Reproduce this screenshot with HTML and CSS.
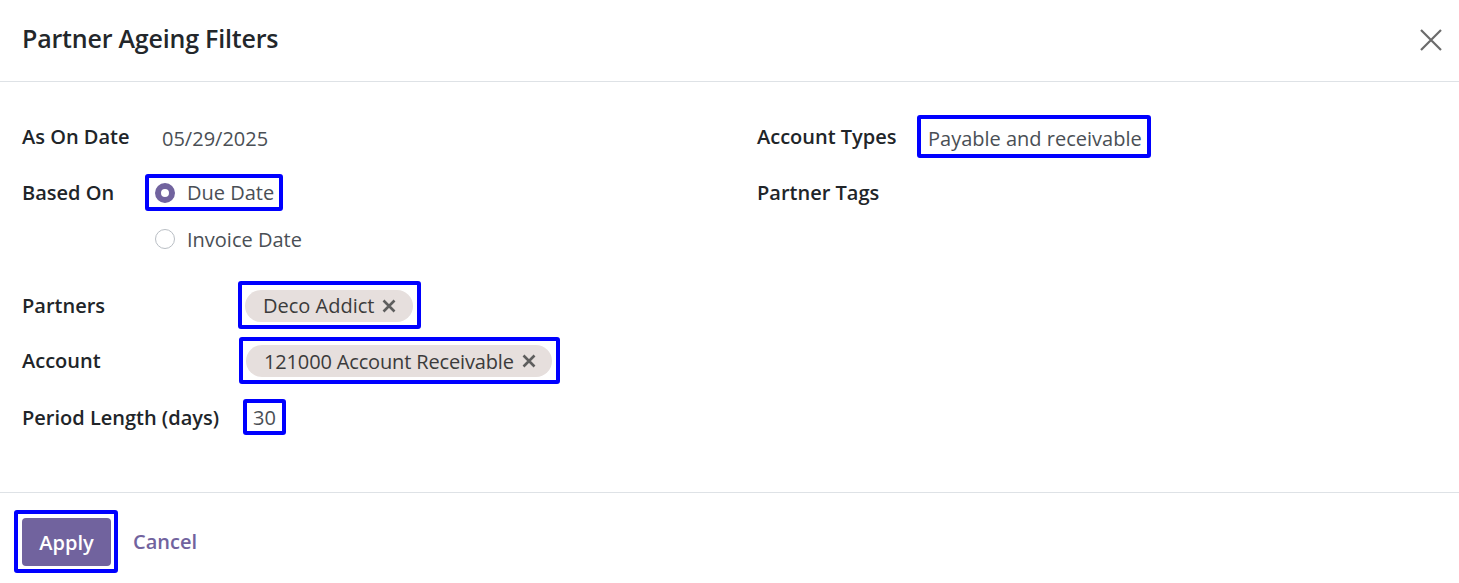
FILE: index.html
```html
<!DOCTYPE html>
<html>
<head>
<meta charset="utf-8">
<link rel="stylesheet" href="styles.css">
</head>
<body>
<div class="modal">
  <header class="modal-header">
    <h4 class="title">Partner Ageing Filters</h4>
    <button class="close" aria-label="Close">
      <svg width="24" height="24" viewBox="0 0 24 24"><path d="M2 2 L22 22 M22 2 L2 22" stroke="#6b6b6b" stroke-width="2.2" fill="none"/></svg>
    </button>
  </header>
  <main class="modal-body">
    <section class="col col-left">
      <div class="row r-date">
        <span class="label lw-date">As On Date</span>
        <span class="value low">05/29/2025</span>
      </div>
      <div class="row r-based">
        <span class="label lw-based">Based On</span>
        <div class="hl radio-box">
          <span class="radio checked"></span>
          <span class="value">Due Date</span>
        </div>
      </div>
      <div class="row r-invoice">
        <span class="radio"></span>
        <span class="value">Invoice Date</span>
      </div>
      <div class="row r-partners">
        <span class="label lw-partners">Partners</span>
        <div class="hl tag-box tb-partner">
          <span class="tag">Deco Addict
            <svg class="x" width="14" height="14" viewBox="0 0 14 14"><path d="M1.5 1.5 L12.5 12.5 M12.5 1.5 L1.5 12.5" stroke="#5e5e5e" stroke-width="2.6" fill="none"/></svg>
          </span>
        </div>
      </div>
      <div class="row r-account">
        <span class="label lw-account">Account</span>
        <div class="hl tag-box tb-account">
          <span class="tag">121000 Account Receivable
            <svg class="x" width="14" height="14" viewBox="0 0 14 14"><path d="M1.5 1.5 L12.5 12.5 M12.5 1.5 L1.5 12.5" stroke="#5e5e5e" stroke-width="2.6" fill="none"/></svg>
          </span>
        </div>
      </div>
      <div class="row r-period">
        <span class="label lw-period">Period Length (days)</span>
        <div class="hl num-box"><span class="value">30</span></div>
      </div>
    </section>
    <section class="col col-right">
      <div class="row r-types">
        <span class="label lw-types">Account Types</span>
        <div class="hl types-box"><span class="value low">Payable and receivable</span></div>
      </div>
      <div class="row r-tags">
        <span class="label">Partner Tags</span>
      </div>
    </section>
  </main>
  <footer class="modal-footer">
    <div class="hl apply-box"><button class="btn-apply">Apply</button></div>
    <button class="btn-cancel">Cancel</button>
  </footer>
</div>
</body>
</html>
```

FILE: styles.css
```css
* { box-sizing: border-box; }
html, body { margin: 0; padding: 0; background: #fff; }
body {
  font-family: "Open Sans", "Noto Sans", "DejaVu Sans", sans-serif;
  font-size: 20px;
  color: #212529;
}
.modal { width: 1459px; height: 583px; display: flex; flex-direction: column; }

.modal-header {
  height: 82px;
  border-bottom: 1px solid #dee2e6;
  display: flex;
  align-items: center;
  justify-content: space-between;
  padding: 0 16px 6px 22px;
}
.title { margin: 0; font-size: 25px; font-weight: 600; color: #23272b; letter-spacing: -0.2px; }
.close { background: none; border: 0; padding: 0; width: 24px; height: 24px; display: flex; margin-top: 4px; }

.modal-body {
  height: 411px;
  display: flex;
  padding: 32px 0 0 22px;
  border-bottom: 1px solid #dee2e6;
}
.col { display: flex; flex-direction: column; }
.col-left { width: 735px; }
.col-right { flex: 1; }

.row { display: flex; align-items: center; }
.label { font-weight: 600; color: #212529; flex: none; }
.value { color: #4a4f55; }
.low { padding-top: 4px; }

.lw-date { width: 140px; }
.lw-based { width: 123px; }
.lw-partners { width: 216px; }
.lw-account { width: 217px; }
.lw-period { width: 221px; }
.lw-types { width: 160px; }

.r-date { height: 44px; }
.r-based { height: 37px; margin-top: 16px; }
.r-invoice { height: 36px; margin-top: 10px; padding-left: 133px; gap: 12px; }
.r-partners { height: 48px; margin-top: 24px; }
.r-account { height: 47px; margin-top: 8px; }
.r-period { height: 36px; margin-top: 15px; }
.r-types { height: 44px; }
.r-tags { height: 37px; margin-top: 16px; }

.hl { border: 4px solid #0000ff; border-radius: 3px; }

.radio-box { height: 37px; display: flex; align-items: center; gap: 12px; padding: 0 5px 0 6px; }
.radio {
  width: 20px; height: 20px; border-radius: 50%;
  border: 1px solid #b9bec4; background: #fff; flex: none;
}
.radio.checked { border: 6.5px solid #71639e; background: #fff; }

.tag-box { display: flex; align-items: center; padding: 4px 4px 3px 3px; }
.tb-partner { height: 48px; }
.tb-account { height: 47px; }
.tag {
  display: inline-flex; align-items: center; gap: 8px;
  height: 32px; padding: 0 17px 0 18px;
  background: #e6dfdd; border-radius: 16px;
  font-weight: 500; color: #3b3b3b;
}
.tb-account .tag { letter-spacing: -0.15px; padding-right: 16px; }
.x { display: block; }

.num-box { height: 36px; display: flex; align-items: center; padding: 0 6px; }
.types-box { height: 43px; display: flex; align-items: center; padding: 0 5px 0 7px; }

.modal-footer {
  flex: 1;
  display: flex;
  align-items: flex-start;
  padding: 17px 0 0 14px;
  gap: 15px;
}
.apply-box { padding: 4px 3px 3px 4px; height: 63px; display: flex; }
.btn-apply {
  width: 89px; height: 48px; border: 0; border-radius: 4px;
  background: #71639e; color: #fff;
  font-family: inherit; font-size: 20px; font-weight: 600;
}
.btn-cancel {
  height: 63px;
  background: none; border: 0; padding: 0;
  font-family: inherit; font-size: 20px; font-weight: 600; color: #71639e;
}
```
